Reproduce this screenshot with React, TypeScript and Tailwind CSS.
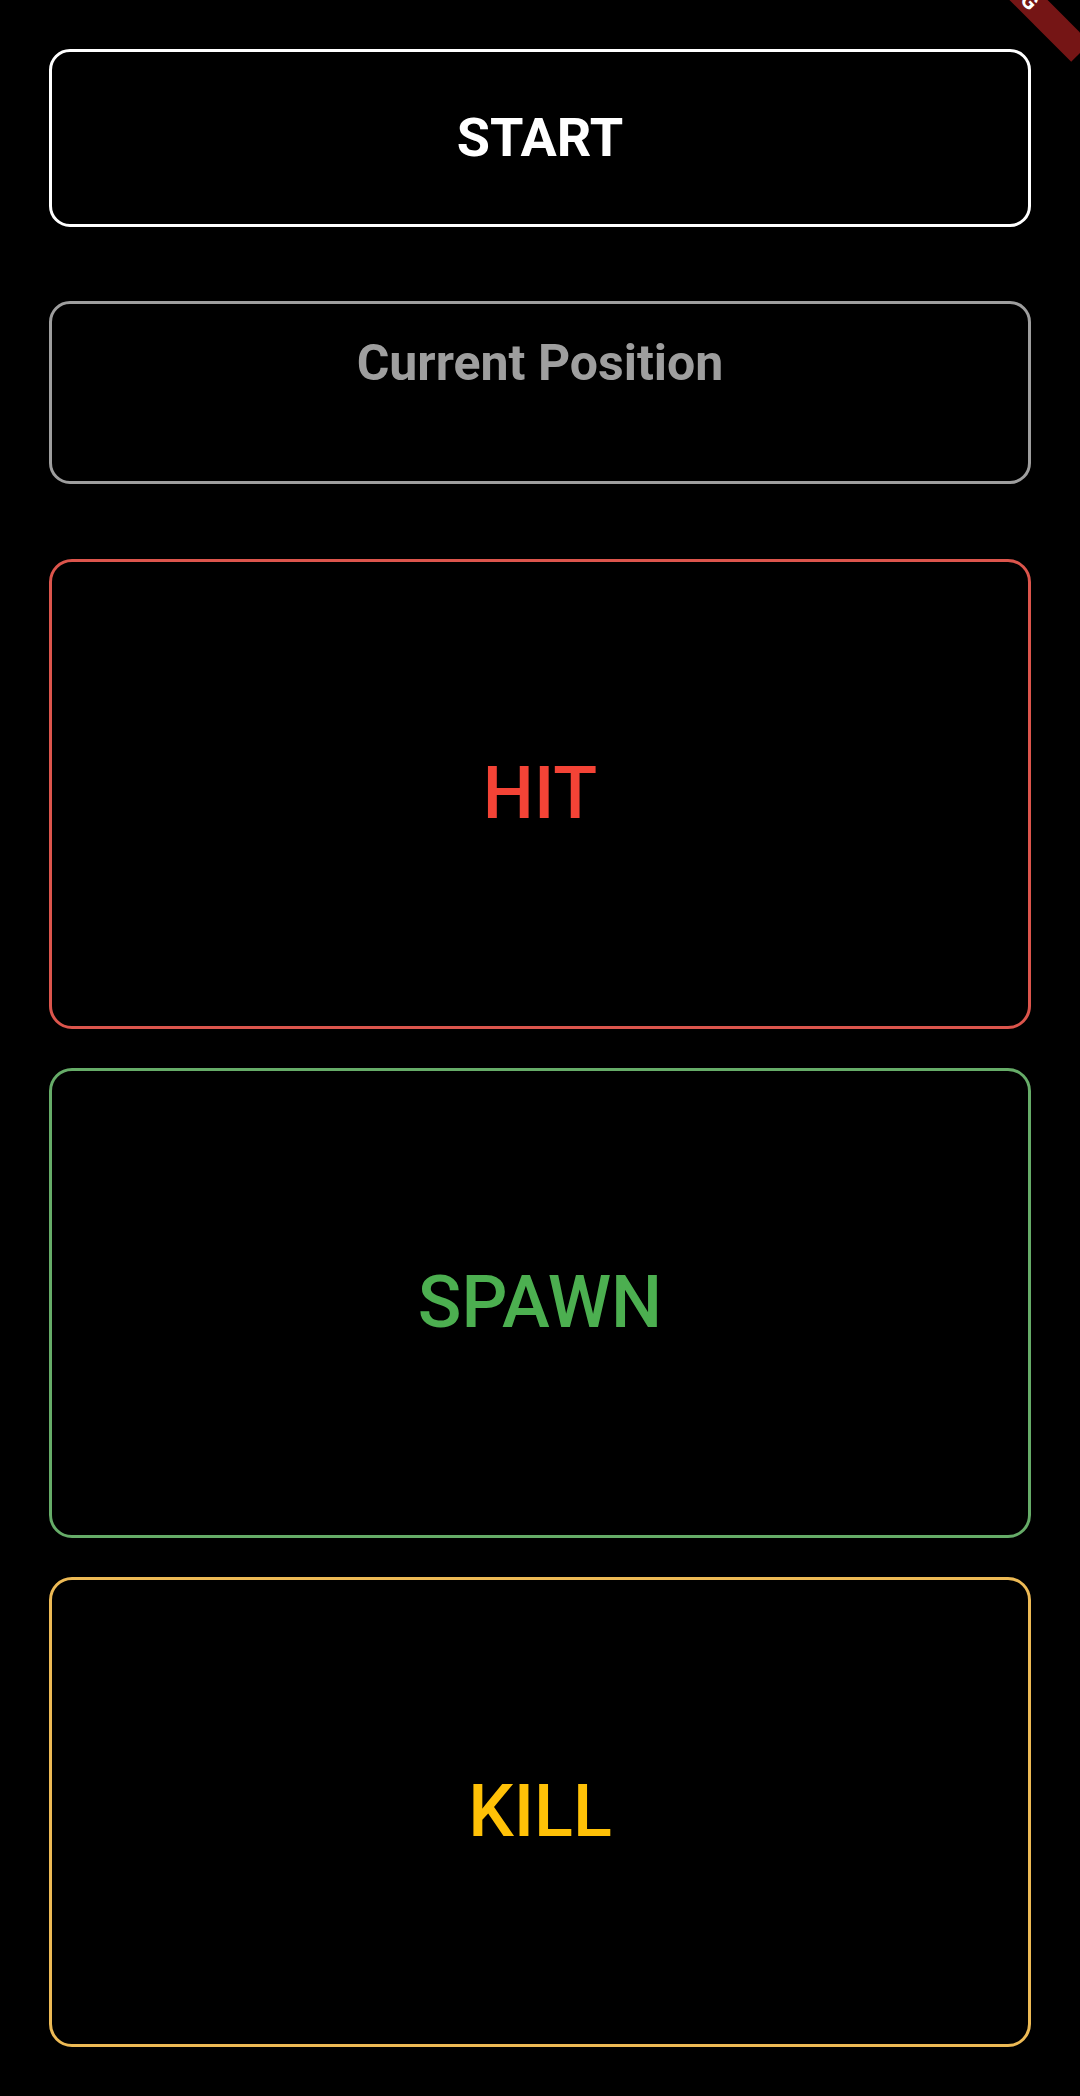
import React from "react";

export default function App() {
  return (
    <div
      className="relative h-[2096px] w-[1080px] overflow-hidden bg-black"
      style={{ fontFamily: "Roboto, 'Noto Sans', Arial, sans-serif" }}
    >
      <div className="flex flex-col px-[49px] pt-[49px] pb-[49px]">
        <button className="flex h-[178px] w-full items-center justify-center rounded-[21px] border-[3px] border-white bg-black">
          <span className="text-[54px] font-bold leading-none text-white">START</span>
        </button>

        <div className="mt-[74px] flex h-[183px] w-full flex-col items-center rounded-[21px] border-[3px] border-[#9e9e9e] pt-[34px]">
          <span className="text-[50px] font-bold leading-none text-[#9e9e9e]">Current Position</span>
        </div>

        <button className="mt-[75px] flex h-[470px] w-full items-center justify-center rounded-[23px] border-[3px] border-[#dc554c] bg-black">
          <span className="text-[72px] font-medium leading-none text-[#f44336]">HIT</span>
        </button>

        <button className="mt-[39px] flex h-[470px] w-full items-center justify-center rounded-[23px] border-[3px] border-[#66ac68] bg-black">
          <span className="text-[72px] font-medium leading-none text-[#4caf50]">SPAWN</span>
        </button>

        <button className="mt-[39px] flex h-[470px] w-full items-center justify-center rounded-[23px] border-[3px] border-[#edba55] bg-black">
          <span className="text-[72px] font-medium leading-none text-[#ffc107]">KILL</span>
        </button>
      </div>

      <div className="absolute left-[910px] top-[-32px] flex h-[27px] w-[200px] rotate-45 items-center justify-center bg-[#751515]">
        <span className="text-[22px] font-bold leading-none text-white">DEBUG</span>
      </div>
    </div>
  );
}
